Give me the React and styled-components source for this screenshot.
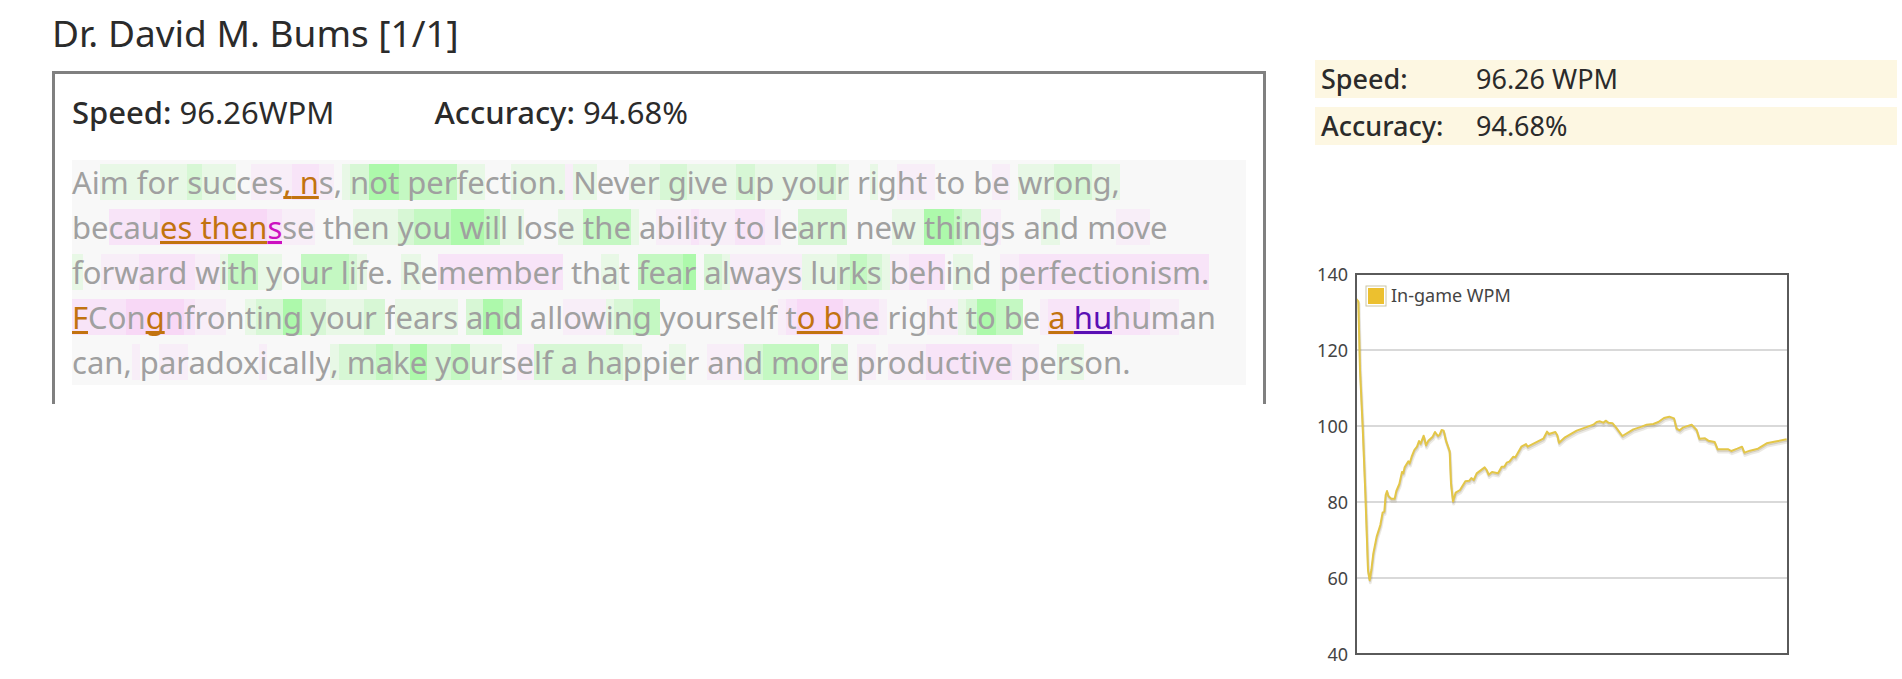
import React from "react";
import styled, { createGlobalStyle } from "styled-components";

const GlobalStyle = createGlobalStyle`
  *, *::before, *::after { box-sizing: border-box; }
  body {
    margin: 0;
    background: #fff;
    color: #2b2b2b;
    font-family: "Noto Sans", "Open Sans", sans-serif;
  }
`;

const Page = styled.main`
  display: grid;
  grid-template-columns: minmax(0, 1214fr) minmax(0, 582fr);
  column-gap: 49px;
  padding: 0 5px 0 52px;
`;

const RaceReview = styled.section`
  min-width: 0;
`;

const Title = styled.h1`
  margin: 0 0 6px;
  font-size: 37px;
  font-weight: 400;
  line-height: 65px;
`;

const Panel = styled.div`
  padding: 16px 17px 19px;
  border: 3px solid #808080;
  border-bottom: 0;
`;

const Stats = styled.dl`
  display: flex;
  gap: 100px;
  margin: 0 0 25px;
  font-size: 31px;
  line-height: 45px;
`;

const Stat = styled.div`
  display: flex;
  gap: 8px;
`;

const StatLabel = styled.dt`
  font-weight: 500;
`;

const StatValue = styled.dd`
  margin: 0;
`;

const TypedText = styled.p`
  margin: 0;
  background: #f8f8f8;
  color: #a0a0a0;
  font-size: 31px;
  line-height: 45px;
`;

const Line = styled.span`
  display: block;
  white-space: pre;
`;

const TONES = {
  g1: "#e8f8e6",
  g2: "#d7f7d5",
  g3: "#c4f8c2",
  g4: "#adf9ab",
  p1: "#f8eef8",
  p2: "#f8e4f8",
  p3: "#f8d8f6",
};

const INKS = {
  typo: "#c2730f",
  extra: "#cc10c0",
  fixed: "#5a0fb4",
};

const Run = styled.span`
  background: ${(p) =>
    p.$tone ? `linear-gradient(${TONES[p.$tone]}, ${TONES[p.$tone]}) 0 3px / 100% 36px no-repeat` : "none"};
  ${(p) =>
    p.$ink &&
    `
    color: ${INKS[p.$ink]};
    text-decoration: underline;
    text-decoration-thickness: 3px;
    text-underline-offset: 2px;
    text-decoration-skip-ink: none;
  `}
`;

const Summary = styled.aside`
  min-width: 0;
  padding-top: 51px;
`;

const SummaryTable = styled.table`
  width: 100%;
  border-spacing: 0 9px;
  table-layout: fixed;
  font-size: 27px;
  line-height: 38px;
`;

const SummaryLabel = styled.th`
  width: 161px;
  padding: 0 0 0 6px;
  background: #fdf7e2;
  font-weight: 500;
  text-align: left;
`;

const SummaryValue = styled.td`
  padding: 0;
  background: #fdf7e2;
`;

const Chart = styled.svg`
  display: block;
  width: 476px;
  max-width: 100%;
  margin-top: 108px;
`;

const ChartText = styled.text`
  fill: #444;
  font-size: 18px;
`;

/* Each run is [text, typing-speed tone, error ink]. */
const LINES = [
  [["Ai"], ["m for ", "g1"], ["s", "g2"], ["uc", "g1"], ["c"], ["es", "p1"], [",", "p1", "typo"], [" n", "p2", "typo"], ["s", "p1"], [","], [" ", "g1"], ["n", "g2"], ["ot", "g4"], [" per", "g3"], ["fe", "g1"], ["ct"], ["ion.", "g1"], [" ", "p1"], ["N", "g1"], ["ev"], ["er", "g1"], [" g", "g2"], ["ive ", "g1"], ["u", "g2"], ["p yo", "g1"], ["u", "g2"], ["r", "g1"], [" r"], ["i", "g1"], ["g"], ["ht ", "p1"], ["to b"], ["e", "p1"], [" "], ["wr", "g1"], ["on", "g2"], ["g,", "g1"]],
  [["be"], ["cau", "p2"], ["es then", "p3", "typo"], ["s", "p2", "extra"], ["se", "p1"], [" th"], ["en ", "g1"], ["y", "g2"], ["ou", "g3"], [" w", "g4"], ["il", "g3"], ["l l", "g1"], ["os"], ["e ", "g1"], ["the", "g3"], [" ", "g1"], ["a"], ["bil", "p1"], ["i", "p2"], ["ty ", "p1"], ["to", "p2"], [" l", "p1"], ["e"], ["arn", "g2"], [" ne"], ["w ", "g1"], ["th", "g4"], ["i", "g3"], ["n", "g2"], ["g", "p1"], ["s a"], ["n", "g1"], ["d m"], ["ov", "p1"], ["e"]],
  [["f", "g1"], ["o"], ["rw", "p1"], ["ard ", "p2"], ["w", "p1"], ["i", "g1"], ["th", "g3"], [" y", "g1"], ["o"], ["ur ", "g3"], ["l", "g3"], ["i", "g2"], ["f", "g1"], ["e. "], ["R", "g1"], ["e"], ["member", "p2"], [" th"], ["a", "g1"], ["t "], ["fea", "g3"], ["r", "g4"], [" "], ["a", "g2"], ["l", "g1"], ["ways", "p1"], [" lu", "g1"], ["r", "g2"], ["k", "g3"], ["s", "g2"], [" ", "g1"], ["b", "p1"], ["eh", "p2"], ["i"], ["n", "g1"], ["d "], ["p", "p1"], ["erfectionism.", "p2"]],
  [["F", "p2", "typo"], ["Co", "p2"], ["n", "p3"], ["g", "p3", "typo"], ["n", "p3"], ["f", "p2"], ["ro", "p1"], ["n"], ["t", "g1"], ["in", "g2"], ["g", "g4"], [" y", "g2"], ["ou", "g1"], ["r ", "g2"], ["f"], ["ears", "g1"], [" "], ["a", "g2"], ["n", "g4"], ["d", "g3"], [" all"], ["ow", "p1"], ["i", "g1"], ["n", "g2"], ["g ", "g3"], ["yourself"], [" ", "p1"], ["t", "p2"], ["o b", "p3", "typo"], ["he", "p2"], [" ", "p1"], ["rig"], ["ht", "p1"], [" ", "g1"], ["t", "g2"], ["o", "g4"], [" b", "g3"], ["e"], [" ", "p1"], ["a ", "p2", "typo"], ["hu", "p2", "fixed"], ["hu", "p2"], ["m", "p1"], ["an"]],
  [["can,"], [" ", "p1"], ["p"], ["ar", "p1"], ["adox"], ["i", "p1"], ["cally"], [",", "g1"], [" m", "g2"], ["a", "g3"], ["k", "g2"], ["e", "g4"], [" y", "g2"], ["o", "g3"], ["ur", "g1"], ["s"], ["e", "p1"], ["lf a ha", "g2"], ["p", "g1"], ["pi"], ["e", "g1"], ["r "], ["an", "p1"], ["d", "g2"], [" mo", "g3"], ["r"], ["e", "g2"], [" "], ["p", "p1"], ["r"], ["od", "p1"], ["uctive", "p2"], [" p", "p1"], ["e"], ["rs", "g1"], ["on."]],
];

/* Running in-game speed, drawn in a 3x coordinate grid. */
const TRACE = [
  [168, 116], [175, 124], [180, 330], [188, 500], [196, 700], [204, 930], [209, 960], [214, 930], [220, 880], [230, 830], [241, 795], [248, 757], [253, 755], [257, 705], [261, 693], [265, 708], [274, 716], [284, 716], [289, 693], [298, 672], [306, 636], [310, 640], [314, 622], [325, 604], [329, 610], [335, 590], [343, 570], [351, 560], [357, 543], [362, 551], [371, 527], [378, 556], [385, 542], [398, 530], [405, 516], [414, 528], [419, 524], [425, 510], [431, 512], [438, 542], [449, 574], [453, 670], [459, 724], [467, 698], [480, 690], [496, 664], [508, 662], [514, 654], [521, 660], [530, 640], [554, 622], [560, 630], [566, 644], [576, 636], [594, 640], [605, 620], [613, 620], [620, 608], [628, 605], [640, 590], [646, 592], [664, 560], [678, 552], [683, 560], [730, 536], [741, 515], [747, 522], [766, 516], [772, 526], [777, 548], [795, 532], [830, 512], [880, 494], [890, 486], [900, 484], [910, 488], [917, 482], [925, 488], [938, 490], [948, 502], [967, 528], [1000, 508], [1025, 500], [1040, 494], [1060, 492], [1075, 486], [1092, 474], [1108, 470], [1122, 475], [1130, 506], [1139, 511], [1150, 502], [1175, 494], [1190, 510], [1198, 536], [1215, 535], [1225, 542], [1244, 546], [1253, 568], [1285, 568], [1294, 573], [1312, 566], [1326, 560], [1333, 578], [1350, 572], [1374, 566], [1400, 550], [1430, 544], [1460, 538],
];

const tracePoints = TRACE.map(([x, y]) => `${x},${y}`).join(" ");

const TICKS = [
  [140, 12],
  [120, 88],
  [100, 164],
  [80, 240],
  [60, 316],
  [40, 392],
];

function SpeedChart() {
  return (
    <Chart viewBox="0 0 476 412" role="img" aria-label="In-game WPM over time">
      {TICKS.slice(1, -1).map(([wpm, y]) => (
        <line key={wpm} x1="41" x2="473" y1={y} y2={y} stroke="#d9d9d9" strokeWidth="2" />
      ))}
      <svg x="-15" y="-2" width="490" height="402" viewBox="0 0 1470 1206">
        <polyline points={tracePoints} transform="translate(2 8)" fill="none" stroke="#7a6a40" strokeOpacity="0.14" strokeWidth="9" strokeLinejoin="round" />
        <polyline points={tracePoints} transform="translate(1 4)" fill="none" stroke="#7a6a40" strokeOpacity="0.22" strokeWidth="6" strokeLinejoin="round" />
        <polyline points={tracePoints} fill="none" stroke="#e3c648" strokeWidth="6" strokeLinejoin="round" />
      </svg>
      <rect x="41" y="12" width="432" height="380" fill="none" stroke="#5a5a5a" strokeWidth="2" />
      <rect x="51" y="24" width="20" height="20" fill="#fff" stroke="#ccc5a4" />
      <rect x="53" y="26" width="16" height="16" fill="#ecc02f" />
      <ChartText x="76" y="40">In-game WPM</ChartText>
      {TICKS.map(([wpm, y]) => (
        <ChartText key={wpm} x="33" y={y + 7} textAnchor="end">
          {wpm}
        </ChartText>
      ))}
    </Chart>
  );
}

export default function App() {
  return (
    <>
      <GlobalStyle />
      <Page>
        <RaceReview>
          <Title>Dr. David M. Bums [1/1]</Title>
          <Panel>
            <Stats>
              <Stat>
                <StatLabel>Speed:</StatLabel>
                <StatValue>96.26WPM</StatValue>
              </Stat>
              <Stat>
                <StatLabel>Accuracy:</StatLabel>
                <StatValue>94.68%</StatValue>
              </Stat>
            </Stats>
            <TypedText>
              {LINES.map((runs, i) => (
                <Line key={i}>
                  {runs.map(([text, tone, ink], j) => (
                    <Run key={j} $tone={tone} $ink={ink}>
                      {text}
                    </Run>
                  ))}
                </Line>
              ))}
            </TypedText>
          </Panel>
        </RaceReview>
        <Summary>
          <SummaryTable>
            <tbody>
              <tr>
                <SummaryLabel scope="row">Speed:</SummaryLabel>
                <SummaryValue>96.26 WPM</SummaryValue>
              </tr>
              <tr>
                <SummaryLabel scope="row">Accuracy:</SummaryLabel>
                <SummaryValue>94.68%</SummaryValue>
              </tr>
            </tbody>
          </SummaryTable>
          <SpeedChart />
        </Summary>
      </Page>
    </>
  );
}
